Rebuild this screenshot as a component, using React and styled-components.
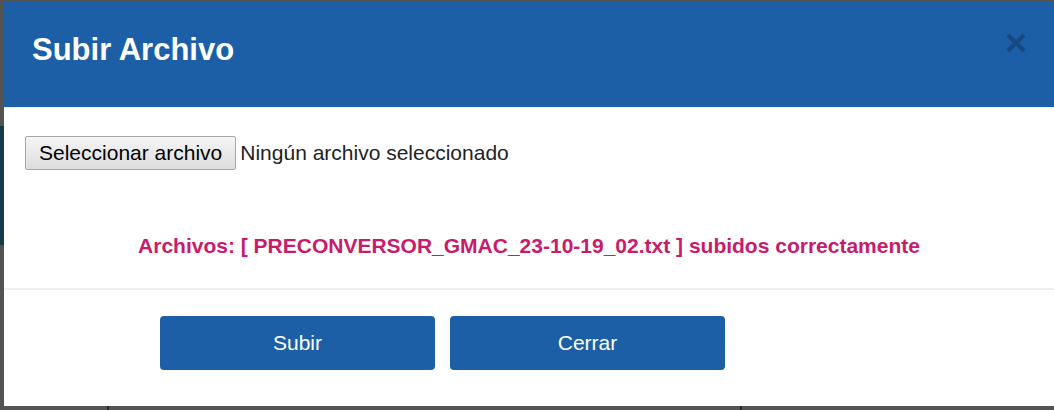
import styled, { createGlobalStyle } from "styled-components";

const GlobalStyle = createGlobalStyle`
  html, body {
    margin: 0;
    padding: 0;
    height: 410px;
    overflow: hidden;
    background: #535353;
  }
  body {
    font-family: "Liberation Sans", Arial, sans-serif;
  }
  * {
    box-sizing: border-box;
  }
`;

const Screen = styled.div`
  display: flex;
  flex-direction: column;
  width: 1054px;
  height: 410px;
  background: #535353;
`;

const Stage = styled.div`
  display: flex;
  flex: 1;
`;

const PageEdge = styled.div`
  display: flex;
  flex-direction: column;
  width: 4px;
  padding-top: 126px;
`;

const EdgeBlock = styled.div`
  width: 100%;
  height: 119px;
  background: #173a48;
`;

const BottomStrip = styled.div`
  display: flex;
  height: 4px;
`;

const Mark = styled.div`
  width: 2px;
  height: 100%;
  margin-left: ${(props) => props.offset}px;
  background: #262626;
`;

const Modal = styled.div`
  display: flex;
  flex-direction: column;
  flex: 1;
  margin-top: 2px;
  background: #fff;
`;

const Header = styled.div`
  display: flex;
  justify-content: space-between;
  align-items: flex-start;
  height: 106px;
  padding: 30px 27px 0 28px;
  background: #1d5fa6;
  border-bottom: 1px solid #eef1f4;
`;

const Title = styled.h4`
  margin: 0;
  font-size: 31px;
  line-height: 36px;
  font-weight: bold;
  color: #fff;
`;

const CloseButton = styled.button`
  display: flex;
  padding: 0;
  margin-top: 0;
  border: none;
  background: none;
  cursor: pointer;
  opacity: 0.22;
`;

const Body = styled.div`
  display: flex;
  flex-direction: column;
  padding: 28px 21px 30px;
  border-bottom: 2px solid #eeeeee;
`;

const FileRow = styled.div`
  display: flex;
  align-items: center;
  gap: 4px;
`;

const FileButton = styled.label`
  display: flex;
  align-items: center;
  height: 34px;
  padding: 0 13px;
  border: 1px solid #a6a6a6;
  border-radius: 2px;
  background: linear-gradient(#f5f5f5, #dddddd);
  font-size: 21px;
  color: #000;
  cursor: pointer;
`;

const FileName = styled.span`
  font-size: 21px;
  color: #222;
`;

const Message = styled.p`
  margin: 64px 0 0;
  font-size: 21px;
  line-height: 24px;
  font-weight: bold;
  text-align: center;
  color: #c81b6b;
`;

const Footer = styled.div`
  display: flex;
  gap: 15px;
  padding: 26px 0 36px 156px;
`;

const ActionButton = styled.button`
  width: 275px;
  height: 54px;
  border: none;
  border-radius: 4px;
  background: #1d5fa6;
  color: #fff;
  font-family: "Liberation Sans", Arial, sans-serif;
  font-size: 21px;
  cursor: pointer;
`;

function CloseIcon() {
  return (
    <svg width="22" height="22" viewBox="0 0 22 22">
      <path d="M3 3 L19 19 M19 3 L3 19" stroke="#000" strokeWidth="4.4" />
    </svg>
  );
}

export default function App() {
  return (
    <>
      <GlobalStyle />
      <Screen>
        <Stage>
          <PageEdge>
            <EdgeBlock />
          </PageEdge>
          <Modal>
            <Header>
              <Title>Subir Archivo</Title>
              <CloseButton aria-label="Cerrar">
                <CloseIcon />
              </CloseButton>
            </Header>
            <Body>
              <FileRow>
                <FileButton>Seleccionar archivo</FileButton>
                <FileName>Ningún archivo seleccionado</FileName>
              </FileRow>
              <Message>
                Archivos: [ PRECONVERSOR_GMAC_23-10-19_02.txt ] subidos correctamente
              </Message>
            </Body>
            <Footer>
              <ActionButton>Subir</ActionButton>
              <ActionButton>Cerrar</ActionButton>
            </Footer>
          </Modal>
        </Stage>
        <BottomStrip>
          <Mark offset={107} />
          <Mark offset={631} />
        </BottomStrip>
      </Screen>
    </>
  );
}
